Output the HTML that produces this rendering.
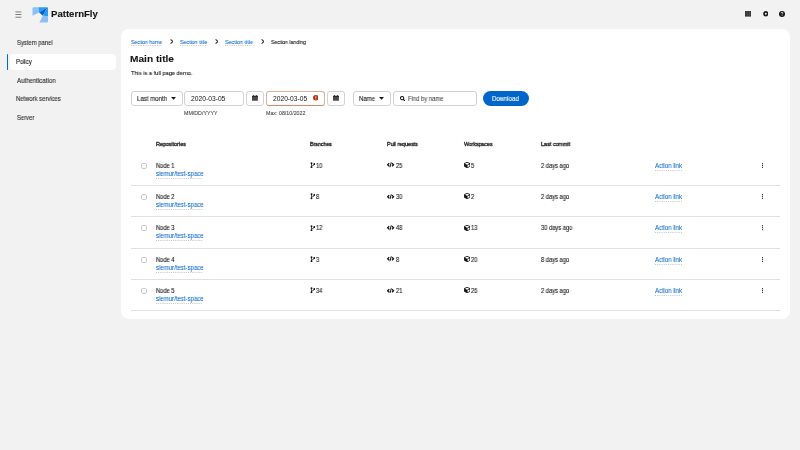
<!DOCTYPE html>
<html><head><meta charset="utf-8">
<style>
*{box-sizing:border-box;margin:0;padding:0}
html,body{width:800px;height:450px;overflow:hidden;background:#f2f2f2;font-family:"Liberation Sans",sans-serif;color:#151515}
.a{position:absolute}
.t{position:absolute;white-space:nowrap;line-height:1;transform-origin:0 0;will-change:transform;-webkit-text-stroke:0.1px currentColor}
.lnk{-webkit-text-stroke:0.04px currentColor !important;text-decoration:underline dotted;text-decoration-color:#c4c8cc;text-underline-offset:1.1px;text-decoration-thickness:0.5px}
.card{position:absolute;left:121px;top:28.5px;width:669.2px;height:290.3px;background:#fff;border-radius:8px}
.box{position:absolute;border:1px solid #d2d2d2;border-radius:3px;background:#fff;top:90.7px;height:15.4px}
.sep{position:absolute;left:131px;width:649px;height:1px;background:#e0e0e0}
.cb{position:absolute;left:140.6px;width:6.2px;height:6.1px;border:1px solid #c8c8c8;border-radius:1.8px;background:#fff}
</style></head><body>
<!-- header -->
<svg class="a" style="left:14.5px;top:10.7px" width="7" height="7" viewBox="0 0 7 7"><g fill="#4d4d4d"><rect x="0.4" y="0.6" width="6" height="0.7"/><rect x="0.4" y="3.1" width="6" height="0.7"/><rect x="0.4" y="5.8" width="6" height="0.7"/></g></svg>
<svg class="a" style="left:31.5px;top:6.5px" width="16.5" height="16" viewBox="0 0 16.5 16">
  <path d="M1.5 0.2 H6.3 L7.1 5.5 L0.5 8.8 V1.2 A1.2 1.2 0 0 1 1.5 0.2Z" fill="#8bc1f7"/>
  <path d="M6.3 0.2 H15.5 L7.1 5.5Z" fill="#2b9af3"/>
  <path d="M15.5 0.2 L7.1 5.5 L10.9 8.7Z" fill="#0066cc"/>
  <path d="M15.5 0.2 A0.6 0.6 0 0 1 16 0.8 V9.3 L10.9 8.7Z" fill="#2b9af3"/>
  <path d="M10.9 8.7 L16 9.3 V14.2 A1.2 1.2 0 0 1 14.8 15.4 H7.4Z" fill="#8bc1f7"/>
</svg>
<svg class="a" style="left:745px;top:11.3px" width="6.2" height="5.6" viewBox="0 0 6.2 5.6"><rect width="6.2" height="5.6" fill="#333"/><g fill="#8a8a8a"><rect x="1.9" y="0" width="0.3" height="5.6"/><rect x="4.0" y="0" width="0.3" height="5.6"/></g><g fill="#5a5a5a"><rect x="0" y="1.75" width="6.2" height="0.25"/><rect x="0" y="3.6" width="6.2" height="0.25"/></g></svg>
<svg class="a" style="left:762.6px;top:11.4px" width="5.6" height="5.6" viewBox="0 0 10 10"><path fill="#151515" fill-rule="evenodd" d="M5 0 L6.2 0.6 L7.6 0.4 L8.2 1.8 L9.5 2.5 L9.3 3.9 L10 5 L9.3 6.1 L9.5 7.5 L8.2 8.2 L7.6 9.6 L6.2 9.4 L5 10 L3.8 9.4 L2.4 9.6 L1.8 8.2 L0.5 7.5 L0.7 6.1 L0 5 L0.7 3.9 L0.5 2.5 L1.8 1.8 L2.4 0.4 L3.8 0.6Z M5 3.2 A1.8 1.8 0 1 0 5 6.8 A1.8 1.8 0 1 0 5 3.2Z"/></svg>
<svg class="a" style="left:779.3px;top:11px" width="6" height="6" viewBox="0 0 10 10"><circle cx="5" cy="5" r="5" fill="#151515"/><path d="M3.4 3.7 C3.4 2.7 4.1 2.2 5 2.2 C5.9 2.2 6.6 2.8 6.6 3.6 C6.6 4.6 5.1 4.8 5.1 5.9" fill="none" stroke="#fff" stroke-width="1.3"/><circle cx="5.1" cy="7.6" r="0.75" fill="#fff"/></svg>

<!-- sidebar -->
<div class="a" style="left:10px;top:54px;width:105.5px;height:15.6px;background:#fff;border-radius:4px"></div>
<div class="a" style="left:6.5px;top:54.2px;width:1.7px;height:15.4px;background:#0066cc;border-radius:1px"></div>

<!-- card -->
<div class="card"></div>
<!-- breadcrumb chevrons -->
<svg class="a" style="left:169.8px;top:39.3px" width="3.6" height="5" viewBox="0 0 3.6 5"><path d="M0.6 0.4 L2.9 2.5 L0.6 4.6" fill="none" stroke="#3a3a3a" stroke-width="1.1"/></svg>
<svg class="a" style="left:214.7px;top:39.3px" width="3.6" height="5" viewBox="0 0 3.6 5"><path d="M0.6 0.4 L2.9 2.5 L0.6 4.6" fill="none" stroke="#3a3a3a" stroke-width="1.1"/></svg>
<svg class="a" style="left:260.5px;top:39.3px" width="3.6" height="5" viewBox="0 0 3.6 5"><path d="M0.6 0.4 L2.9 2.5 L0.6 4.6" fill="none" stroke="#3a3a3a" stroke-width="1.1"/></svg>

<!-- toolbar -->
<div class="box" style="left:131px;width:51.6px"></div>
<svg class="a" style="left:171px;top:97.1px" width="5" height="2.8" viewBox="0 0 5 2.8"><path d="M0 0 H5 L2.5 2.8Z" fill="#151515"/></svg>
<div class="box" style="left:184.4px;width:59.3px"></div>
<div class="box" style="left:245.5px;width:18.5px"></div>
<svg class="a" style="left:252.1px;top:95.2px" width="5.9" height="5.7" viewBox="0 0 5.9 5.7"><path d="M0.5 0.7 H5.4 A0.5 0.5 0 0 1 5.9 1.2 V5.2 A0.5 0.5 0 0 1 5.4 5.7 H0.5 A0.5 0.5 0 0 1 0 5.2 V1.2 A0.5 0.5 0 0 1 0.5 0.7Z" fill="#4a4a4a"/><rect x="0" y="0.9" width="5.9" height="1.2" fill="#2a2a2a"/><rect x="1" y="0" width="1" height="1.2" rx="0.4" fill="#2a2a2a"/><rect x="3.9" y="0" width="1" height="1.2" rx="0.4" fill="#2a2a2a"/></svg>
<div class="box" style="left:266.3px;width:58.4px;border-color:#e3b09b;border-bottom:1.5px solid #d08a6c"></div>
<svg class="a" style="left:312.8px;top:95.4px" width="5.6" height="5.6" viewBox="0 0 10 10"><circle cx="5" cy="5" r="5" fill="#b1380b"/><path d="M5 3 V5.7" stroke="#fff" stroke-width="1.3" stroke-linecap="round"/><circle cx="5" cy="7.5" r="0.75" fill="#fff"/></svg>
<div class="box" style="left:326.7px;width:18.5px"></div>
<svg class="a" style="left:333.3px;top:95.2px" width="5.9" height="5.7" viewBox="0 0 5.9 5.7"><path d="M0.5 0.7 H5.4 A0.5 0.5 0 0 1 5.9 1.2 V5.2 A0.5 0.5 0 0 1 5.4 5.7 H0.5 A0.5 0.5 0 0 1 0 5.2 V1.2 A0.5 0.5 0 0 1 0.5 0.7Z" fill="#4a4a4a"/><rect x="0" y="0.9" width="5.9" height="1.2" fill="#2a2a2a"/><rect x="1" y="0" width="1" height="1.2" rx="0.4" fill="#2a2a2a"/><rect x="3.9" y="0" width="1" height="1.2" rx="0.4" fill="#2a2a2a"/></svg>
<div class="box" style="left:352.5px;width:38.1px"></div>
<svg class="a" style="left:379px;top:97px" width="5" height="2.8" viewBox="0 0 5 2.8"><path d="M0 0 H5 L2.5 2.8Z" fill="#151515"/></svg>
<div class="box" style="left:392.5px;width:84px"></div>
<svg class="a" style="left:399.7px;top:95.7px" width="5.4" height="5.4" viewBox="0 0 10 10"><circle cx="4" cy="4" r="3.1" fill="none" stroke="#151515" stroke-width="1.9"/><path d="M6.2 6.2 L9.2 9.2" stroke="#151515" stroke-width="2" stroke-linecap="round"/></svg>
<div class="a" style="left:482.8px;top:90.9px;width:46.1px;height:15.4px;border-radius:8px;background:#0066cc"></div>

<div class="cb" style="top:162.80px"></div>
<svg class="a" style="left:310px;top:162.10px" width="5.4" height="6.4" viewBox="0 0 5.4 6.4"><g fill="#151515"><circle cx="1.5" cy="1.2" r="0.95"/><circle cx="1.5" cy="5.2" r="0.95"/><circle cx="4.3" cy="2" r="0.9"/></g><g fill="none" stroke="#151515" stroke-width="0.75"><path d="M1.5 1.2 V5.2"/><path d="M4.3 2 C4.3 3.5 2.2 3.3 1.5 4.5"/></g></svg>
<svg class="a" style="left:387.4px;top:162.40px" width="7.2" height="5.6" viewBox="0 0 7.2 5.6"><g fill="none" stroke="#151515"><path d="M2.2 1.3 L0.7 2.8 L2.2 4.3" stroke-width="1.35"/><path d="M5 1.3 L6.5 2.8 L5 4.3" stroke-width="1.35"/><path d="M4.3 0.3 L2.9 5.3" stroke-width="1"/></g></svg>
<svg class="a" style="left:463.9px;top:161.90px" width="6.3" height="6.2" viewBox="0 0 512 512"><path fill="#151515" fill-rule="evenodd" d="M239.1 6.3l-208 78c-18.7 7-31.1 25-31.1 45v225.1c0 18.2 10.3 34.8 26.5 42.9l208 104c13.5 6.8 29.4 6.8 42.900 0l208-104c16.3-8.1 26.5-24.8 26.5-42.9V129.3c0-20-12.4-37.9-31.1-44.9l-208-78C262 2.2 250 2.2 239.1 6.3zM256 68.4l192 72v1.1l-192 78-192-78v-1.1l192-72zm32 356V275.5l160-65v133.9l-160 80z"/></svg>
<svg class="a" style="left:761.8px;top:162.80px" width="1.4" height="5.4" viewBox="0 0 1.4 5.4"><g fill="#151515"><circle cx="0.7" cy="0.7" r="0.68"/><circle cx="0.7" cy="2.7" r="0.68"/><circle cx="0.7" cy="4.7" r="0.68"/></g></svg>
<div class="sep" style="top:185px"></div>
<div class="cb" style="top:194.10px"></div>
<svg class="a" style="left:310px;top:193.40px" width="5.4" height="6.4" viewBox="0 0 5.4 6.4"><g fill="#151515"><circle cx="1.5" cy="1.2" r="0.95"/><circle cx="1.5" cy="5.2" r="0.95"/><circle cx="4.3" cy="2" r="0.9"/></g><g fill="none" stroke="#151515" stroke-width="0.75"><path d="M1.5 1.2 V5.2"/><path d="M4.3 2 C4.3 3.5 2.2 3.3 1.5 4.5"/></g></svg>
<svg class="a" style="left:387.4px;top:193.70px" width="7.2" height="5.6" viewBox="0 0 7.2 5.6"><g fill="none" stroke="#151515"><path d="M2.2 1.3 L0.7 2.8 L2.2 4.3" stroke-width="1.35"/><path d="M5 1.3 L6.5 2.8 L5 4.3" stroke-width="1.35"/><path d="M4.3 0.3 L2.9 5.3" stroke-width="1"/></g></svg>
<svg class="a" style="left:463.9px;top:193.20px" width="6.3" height="6.2" viewBox="0 0 512 512"><path fill="#151515" fill-rule="evenodd" d="M239.1 6.3l-208 78c-18.7 7-31.1 25-31.1 45v225.1c0 18.2 10.3 34.8 26.5 42.9l208 104c13.5 6.8 29.4 6.8 42.900 0l208-104c16.3-8.1 26.5-24.8 26.5-42.9V129.3c0-20-12.4-37.9-31.1-44.9l-208-78C262 2.2 250 2.2 239.1 6.3zM256 68.4l192 72v1.1l-192 78-192-78v-1.1l192-72zm32 356V275.5l160-65v133.9l-160 80z"/></svg>
<svg class="a" style="left:761.8px;top:194.10px" width="1.4" height="5.4" viewBox="0 0 1.4 5.4"><g fill="#151515"><circle cx="0.7" cy="0.7" r="0.68"/><circle cx="0.7" cy="2.7" r="0.68"/><circle cx="0.7" cy="4.7" r="0.68"/></g></svg>
<div class="sep" style="top:216px"></div>
<div class="cb" style="top:225.40px"></div>
<svg class="a" style="left:310px;top:224.70px" width="5.4" height="6.4" viewBox="0 0 5.4 6.4"><g fill="#151515"><circle cx="1.5" cy="1.2" r="0.95"/><circle cx="1.5" cy="5.2" r="0.95"/><circle cx="4.3" cy="2" r="0.9"/></g><g fill="none" stroke="#151515" stroke-width="0.75"><path d="M1.5 1.2 V5.2"/><path d="M4.3 2 C4.3 3.5 2.2 3.3 1.5 4.5"/></g></svg>
<svg class="a" style="left:387.4px;top:225.00px" width="7.2" height="5.6" viewBox="0 0 7.2 5.6"><g fill="none" stroke="#151515"><path d="M2.2 1.3 L0.7 2.8 L2.2 4.3" stroke-width="1.35"/><path d="M5 1.3 L6.5 2.8 L5 4.3" stroke-width="1.35"/><path d="M4.3 0.3 L2.9 5.3" stroke-width="1"/></g></svg>
<svg class="a" style="left:463.9px;top:224.50px" width="6.3" height="6.2" viewBox="0 0 512 512"><path fill="#151515" fill-rule="evenodd" d="M239.1 6.3l-208 78c-18.7 7-31.1 25-31.1 45v225.1c0 18.2 10.3 34.8 26.5 42.9l208 104c13.5 6.8 29.4 6.8 42.900 0l208-104c16.3-8.1 26.5-24.8 26.5-42.9V129.3c0-20-12.4-37.9-31.1-44.9l-208-78C262 2.2 250 2.2 239.1 6.3zM256 68.4l192 72v1.1l-192 78-192-78v-1.1l192-72zm32 356V275.5l160-65v133.9l-160 80z"/></svg>
<svg class="a" style="left:761.8px;top:225.40px" width="1.4" height="5.4" viewBox="0 0 1.4 5.4"><g fill="#151515"><circle cx="0.7" cy="0.7" r="0.68"/><circle cx="0.7" cy="2.7" r="0.68"/><circle cx="0.7" cy="4.7" r="0.68"/></g></svg>
<div class="sep" style="top:247.6px"></div>
<div class="cb" style="top:256.70px"></div>
<svg class="a" style="left:310px;top:256.00px" width="5.4" height="6.4" viewBox="0 0 5.4 6.4"><g fill="#151515"><circle cx="1.5" cy="1.2" r="0.95"/><circle cx="1.5" cy="5.2" r="0.95"/><circle cx="4.3" cy="2" r="0.9"/></g><g fill="none" stroke="#151515" stroke-width="0.75"><path d="M1.5 1.2 V5.2"/><path d="M4.3 2 C4.3 3.5 2.2 3.3 1.5 4.5"/></g></svg>
<svg class="a" style="left:387.4px;top:256.30px" width="7.2" height="5.6" viewBox="0 0 7.2 5.6"><g fill="none" stroke="#151515"><path d="M2.2 1.3 L0.7 2.8 L2.2 4.3" stroke-width="1.35"/><path d="M5 1.3 L6.5 2.8 L5 4.3" stroke-width="1.35"/><path d="M4.3 0.3 L2.9 5.3" stroke-width="1"/></g></svg>
<svg class="a" style="left:463.9px;top:255.80px" width="6.3" height="6.2" viewBox="0 0 512 512"><path fill="#151515" fill-rule="evenodd" d="M239.1 6.3l-208 78c-18.7 7-31.1 25-31.1 45v225.1c0 18.2 10.3 34.8 26.5 42.9l208 104c13.5 6.8 29.4 6.8 42.900 0l208-104c16.3-8.1 26.5-24.8 26.5-42.9V129.3c0-20-12.4-37.9-31.1-44.9l-208-78C262 2.2 250 2.2 239.1 6.3zM256 68.4l192 72v1.1l-192 78-192-78v-1.1l192-72zm32 356V275.5l160-65v133.9l-160 80z"/></svg>
<svg class="a" style="left:761.8px;top:256.70px" width="1.4" height="5.4" viewBox="0 0 1.4 5.4"><g fill="#151515"><circle cx="0.7" cy="0.7" r="0.68"/><circle cx="0.7" cy="2.7" r="0.68"/><circle cx="0.7" cy="4.7" r="0.68"/></g></svg>
<div class="sep" style="top:279px"></div>
<div class="cb" style="top:288.00px"></div>
<svg class="a" style="left:310px;top:287.30px" width="5.4" height="6.4" viewBox="0 0 5.4 6.4"><g fill="#151515"><circle cx="1.5" cy="1.2" r="0.95"/><circle cx="1.5" cy="5.2" r="0.95"/><circle cx="4.3" cy="2" r="0.9"/></g><g fill="none" stroke="#151515" stroke-width="0.75"><path d="M1.5 1.2 V5.2"/><path d="M4.3 2 C4.3 3.5 2.2 3.3 1.5 4.5"/></g></svg>
<svg class="a" style="left:387.4px;top:287.60px" width="7.2" height="5.6" viewBox="0 0 7.2 5.6"><g fill="none" stroke="#151515"><path d="M2.2 1.3 L0.7 2.8 L2.2 4.3" stroke-width="1.35"/><path d="M5 1.3 L6.5 2.8 L5 4.3" stroke-width="1.35"/><path d="M4.3 0.3 L2.9 5.3" stroke-width="1"/></g></svg>
<svg class="a" style="left:463.9px;top:287.10px" width="6.3" height="6.2" viewBox="0 0 512 512"><path fill="#151515" fill-rule="evenodd" d="M239.1 6.3l-208 78c-18.7 7-31.1 25-31.1 45v225.1c0 18.2 10.3 34.8 26.5 42.9l208 104c13.5 6.8 29.4 6.8 42.900 0l208-104c16.3-8.1 26.5-24.8 26.5-42.9V129.3c0-20-12.4-37.9-31.1-44.9l-208-78C262 2.2 250 2.2 239.1 6.3zM256 68.4l192 72v1.1l-192 78-192-78v-1.1l192-72zm32 356V275.5l160-65v133.9l-160 80z"/></svg>
<svg class="a" style="left:761.8px;top:288.00px" width="1.4" height="5.4" viewBox="0 0 1.4 5.4"><g fill="#151515"><circle cx="0.7" cy="0.7" r="0.68"/><circle cx="0.7" cy="2.7" r="0.68"/><circle cx="0.7" cy="4.7" r="0.68"/></g></svg>
<div class="sep" style="top:310px"></div>
<div class="t" style="left:51.16px;top:10.00px;font-size:9.0px;color:#151515;font-weight:700;transform:scaleX(1.064);">PatternFly</div>
<div class="t" style="left:16.52px;top:40.00px;font-size:6.3px;color:#2a2a2a;transform:scaleX(0.933);">System panel</div>
<div class="t" style="left:16.28px;top:59.00px;font-size:6.3px;color:#151515;transform:scaleX(0.935);">Policy</div>
<div class="t" style="left:16.75px;top:78.00px;font-size:6.3px;color:#2a2a2a;transform:scaleX(0.965);">Authentication</div>
<div class="t" style="left:16.28px;top:96.00px;font-size:6.3px;color:#2a2a2a;transform:scaleX(0.934);">Network services</div>
<div class="t" style="left:16.52px;top:115.00px;font-size:6.3px;color:#2a2a2a;transform:scaleX(0.931);">Server</div>
<div class="t lnk" style="left:130.53px;top:40.00px;font-size:5.9px;color:#0066cc;transform:scaleX(0.864);">Section home</div>
<div class="t lnk" style="left:179.78px;top:40.00px;font-size:5.9px;color:#0066cc;transform:scaleX(0.899);">Section title</div>
<div class="t lnk" style="left:225.37px;top:40.00px;font-size:5.9px;color:#0066cc;transform:scaleX(0.916);">Section title</div>
<div class="t" style="left:271.08px;top:40.00px;font-size:5.9px;color:#151515;transform:scaleX(0.868);">Section landing</div>
<div class="t" style="left:130.47px;top:54.00px;font-size:9.7px;color:#151515;font-weight:700;transform:scaleX(1.048);">Main title</div>
<div class="t" style="left:131.41px;top:70.00px;font-size:6.1px;color:#151515;transform:scaleX(0.929);">This is a full page demo.</div>
<div class="t" style="left:137.27px;top:96.00px;font-size:6.3px;color:#151515;transform:scaleX(0.958);">Last month</div>
<div class="t" style="left:190.94px;top:96.00px;font-size:6.5px;color:#151515;transform:scaleX(1.033);-webkit-text-stroke:0;">2020-03-05</div>
<div class="t" style="left:184.33px;top:111.00px;font-size:5.1px;color:#4d4d4d;transform:scaleX(1.038);">MM/DD/YYYY</div>
<div class="t" style="left:272.54px;top:96.00px;font-size:6.5px;color:#151515;transform:scaleX(1.026);-webkit-text-stroke:0;">2020-03-05</div>
<div class="t" style="left:265.85px;top:111.00px;font-size:5.3px;color:#4d4d4d;">Max: 08/10/2022</div>
<div class="t" style="left:358.92px;top:96.00px;font-size:6.3px;color:#151515;transform:scaleX(0.956);">Name</div>
<div class="t" style="left:407.64px;top:96.00px;font-size:6.3px;color:#4d4d4d;transform:scaleX(0.926);">Find by name</div>
<div class="t" style="left:492.42px;top:96.00px;font-size:6.3px;color:#ffffff;transform:scaleX(0.959);">Download</div>
<div class="t" style="left:155.82px;top:142.00px;font-size:5.6px;color:#151515;transform:scaleX(0.960);-webkit-text-stroke:0.3px #151515;">Repositories</div>
<div class="t" style="left:310.33px;top:142.00px;font-size:5.6px;color:#151515;transform:scaleX(0.924);-webkit-text-stroke:0.3px #151515;">Branches</div>
<div class="t" style="left:386.97px;top:142.00px;font-size:5.6px;color:#151515;transform:scaleX(0.952);-webkit-text-stroke:0.3px #151515;">Pull requests</div>
<div class="t" style="left:464.00px;top:142.00px;font-size:5.6px;color:#151515;transform:scaleX(0.924);-webkit-text-stroke:0.3px #151515;">Workspaces</div>
<div class="t" style="left:540.56px;top:142.00px;font-size:5.6px;color:#151515;transform:scaleX(0.975);-webkit-text-stroke:0.3px #151515;">Last commit</div>
<div class="t" style="left:155.75px;top:163.00px;font-size:6.4px;color:#151515;transform:scaleX(0.898);">Node 1</div>
<div class="t lnk" style="left:156.06px;top:171.00px;font-size:6.4px;color:#0066cc;transform:scaleX(0.942);text-underline-offset:1.8px;">siemur/test-space</div>
<div class="t" style="left:316.20px;top:163.00px;font-size:6.4px;color:#151515;transform:scaleX(0.898);">10</div>
<div class="t" style="left:395.73px;top:163.00px;font-size:6.4px;color:#151515;transform:scaleX(0.898);">25</div>
<div class="t" style="left:471.18px;top:163.00px;font-size:6.4px;color:#151515;transform:scaleX(0.898);">5</div>
<div class="t" style="left:540.53px;top:163.00px;font-size:6.4px;color:#151515;transform:scaleX(0.898);">2 days ago</div>
<div class="t lnk" style="left:655.10px;top:163.00px;font-size:6.4px;color:#0066cc;transform:scaleX(0.927);text-underline-offset:1.5px;">Action link</div>
<div class="t" style="left:155.75px;top:194.00px;font-size:6.4px;color:#151515;transform:scaleX(0.898);">Node 2</div>
<div class="t lnk" style="left:156.06px;top:202.00px;font-size:6.4px;color:#0066cc;transform:scaleX(0.942);text-underline-offset:1.8px;">siemur/test-space</div>
<div class="t" style="left:316.38px;top:194.00px;font-size:6.4px;color:#151515;transform:scaleX(0.898);">8</div>
<div class="t" style="left:395.82px;top:194.00px;font-size:6.4px;color:#151515;transform:scaleX(0.898);">30</div>
<div class="t" style="left:471.13px;top:194.00px;font-size:6.4px;color:#151515;transform:scaleX(0.898);">2</div>
<div class="t" style="left:540.53px;top:194.00px;font-size:6.4px;color:#151515;transform:scaleX(0.898);">2 days ago</div>
<div class="t lnk" style="left:655.10px;top:194.00px;font-size:6.4px;color:#0066cc;transform:scaleX(0.927);text-underline-offset:1.5px;">Action link</div>
<div class="t" style="left:155.75px;top:225.00px;font-size:6.4px;color:#151515;transform:scaleX(0.898);">Node 3</div>
<div class="t lnk" style="left:156.06px;top:233.00px;font-size:6.4px;color:#0066cc;transform:scaleX(0.942);text-underline-offset:1.8px;">siemur/test-space</div>
<div class="t" style="left:316.20px;top:225.00px;font-size:6.4px;color:#151515;transform:scaleX(0.898);">12</div>
<div class="t" style="left:395.91px;top:225.00px;font-size:6.4px;color:#151515;transform:scaleX(0.898);">48</div>
<div class="t" style="left:471.00px;top:225.00px;font-size:6.4px;color:#151515;transform:scaleX(0.898);">13</div>
<div class="t" style="left:540.62px;top:225.00px;font-size:6.4px;color:#151515;transform:scaleX(0.898);">30 days ago</div>
<div class="t lnk" style="left:655.10px;top:225.00px;font-size:6.4px;color:#0066cc;transform:scaleX(0.927);text-underline-offset:1.5px;">Action link</div>
<div class="t" style="left:155.75px;top:257.00px;font-size:6.4px;color:#151515;transform:scaleX(0.898);">Node 4</div>
<div class="t lnk" style="left:156.06px;top:265.00px;font-size:6.4px;color:#0066cc;transform:scaleX(0.942);text-underline-offset:1.8px;">siemur/test-space</div>
<div class="t" style="left:316.42px;top:257.00px;font-size:6.4px;color:#151515;transform:scaleX(0.898);">3</div>
<div class="t" style="left:395.78px;top:257.00px;font-size:6.4px;color:#151515;transform:scaleX(0.898);">8</div>
<div class="t" style="left:471.13px;top:257.00px;font-size:6.4px;color:#151515;transform:scaleX(0.898);">20</div>
<div class="t" style="left:540.58px;top:257.00px;font-size:6.4px;color:#151515;transform:scaleX(0.898);">8 days ago</div>
<div class="t lnk" style="left:655.10px;top:257.00px;font-size:6.4px;color:#0066cc;transform:scaleX(0.927);text-underline-offset:1.5px;">Action link</div>
<div class="t" style="left:155.75px;top:288.00px;font-size:6.4px;color:#151515;transform:scaleX(0.898);">Node 5</div>
<div class="t lnk" style="left:156.06px;top:296.00px;font-size:6.4px;color:#0066cc;transform:scaleX(0.942);text-underline-offset:1.8px;">siemur/test-space</div>
<div class="t" style="left:316.42px;top:288.00px;font-size:6.4px;color:#151515;transform:scaleX(0.898);">34</div>
<div class="t" style="left:395.73px;top:288.00px;font-size:6.4px;color:#151515;transform:scaleX(0.898);">21</div>
<div class="t" style="left:471.13px;top:288.00px;font-size:6.4px;color:#151515;transform:scaleX(0.898);">26</div>
<div class="t" style="left:540.53px;top:288.00px;font-size:6.4px;color:#151515;transform:scaleX(0.898);">2 days ago</div>
<div class="t lnk" style="left:655.10px;top:288.00px;font-size:6.4px;color:#0066cc;transform:scaleX(0.927);text-underline-offset:1.5px;">Action link</div>
</body></html>
